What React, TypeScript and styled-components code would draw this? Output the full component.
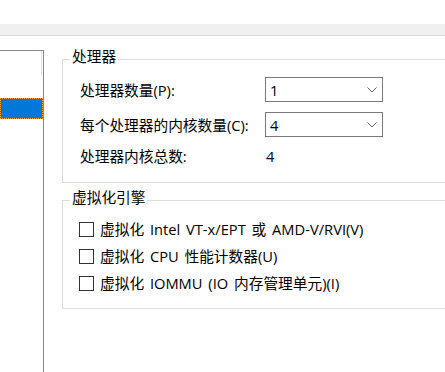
import styled, { createGlobalStyle } from "styled-components";

const GlobalStyle = createGlobalStyle`
  html, body {
    margin: 0;
    padding: 0;
    background: #ffffff;
    overflow: hidden;
  }
  body {
    font-family: "Open Sans", "Noto Sans CJK SC", sans-serif;
    font-size: 14.7px;
    word-spacing: 2px;
    color: #000000;
  }
`;

const Window = styled.div`
  width: 445px;
  height: 372px;
  overflow: hidden;
  display: flex;
  flex-direction: column;
`;

const TitleSpace = styled.div`
  height: 24px;
  background: #ffffff;
`;

const TabStrip = styled.div`
  height: 11px;
  background: #f0f0f0;
  border-bottom: 1px solid #dadada;
`;

const Body = styled.div`
  flex: 1;
  display: flex;
`;

const NavList = styled.div`
  width: 44px;
  margin-top: 14px;
  border-top: 1px solid #828790;
  border-right: 1px solid #828790;
  display: flex;
  flex-direction: column;
`;

const ScrollEdge = styled.div`
  align-self: flex-end;
  width: 1px;
  height: 25px;
  margin-right: 1px;
  background: #e3e3e3;
`;

const NavItem = styled.div<{ $selected?: boolean }>`
  margin-top: 22px;
  width: 43px;
  height: 21px;
  box-sizing: border-box;
  background: ${(p) => (p.$selected ? "#0078d7" : "transparent")};
  border: 1px dotted ${(p) => (p.$selected ? "#f5a243" : "transparent")};
`;

const Settings = styled.div`
  padding: 10px 0 0 18px;
  display: flex;
  flex-direction: column;
  width: 500px;
  flex-shrink: 0;
`;

const Group = styled.fieldset<{ $gap?: number }>`
  margin: ${(p) => p.$gap ?? 0}px 0 0 0;
  padding: 5px 0 17px 7px;
  border: 1px solid #dcdcdc;
  min-width: 0;
`;

const Legend = styled.legend`
  padding: 0 2px 6px;
  line-height: 20px;
`;

const FieldGrid = styled.div`
  margin-left: 10px;
  display: grid;
  grid-template-columns: 185px 118px;
  grid-template-rows: 25px 25px 18px;
  row-gap: 10px;
  align-items: center;
`;

const Label = styled.span`
  line-height: 18px;
  white-space: nowrap;
`;

const Value = styled.span`
  line-height: 18px;
  padding-left: 1px;
`;

const Combo = styled.div`
  height: 25px;
  box-sizing: border-box;
  border: 1px solid #7a7a7a;
  background: #ffffff;
  display: flex;
  align-items: center;
  justify-content: space-between;
  padding: 0 5px 0 4px;
  line-height: 18px;
`;

const Chevron = () => (
  <svg width="10" height="6" viewBox="0 0 10 6">
    <path d="M0.5 0.5 L5 5 L9.5 0.5" fill="none" stroke="#606060" strokeWidth="1" />
  </svg>
);

const CheckList = styled.div`
  margin: 4px 0 0 9px;
  display: flex;
  flex-direction: column;
  gap: 12px;
`;

const CheckRow = styled.label`
  display: flex;
  align-items: center;
  gap: 6px;
  height: 15px;
  line-height: 15px;
  white-space: nowrap;
`;

const Box = styled.span`
  width: 15px;
  height: 15px;
  box-sizing: border-box;
  border: 1px solid #333333;
  background: #ffffff;
  flex-shrink: 0;
`;

const checks = [
  "虚拟化 Intel VT-x/EPT 或 AMD-V/RVI(V)",
  "虚拟化 CPU 性能计数器(U)",
  "虚拟化 IOMMU (IO 内存管理单元)(I)",
];

export default function App() {
  return (
    <Window>
      <GlobalStyle />
      <TitleSpace />
      <TabStrip />
      <Body>
        <NavList>
          <ScrollEdge />
          <NavItem $selected />
        </NavList>
        <Settings>
          <Group>
            <Legend>处理器</Legend>
            <FieldGrid>
              <Label>处理器数量(P):</Label>
              <Combo>
                1
                <Chevron />
              </Combo>
              <Label>每个处理器的内核数量(C):</Label>
              <Combo>
                4
                <Chevron />
              </Combo>
              <Label>处理器内核总数:</Label>
              <Value>4</Value>
            </FieldGrid>
          </Group>
          <Group $gap={4}>
            <Legend>虚拟化引擎</Legend>
            <CheckList>
              {checks.map((c) => (
                <CheckRow key={c}>
                  <Box />
                  {c}
                </CheckRow>
              ))}
            </CheckList>
          </Group>
        </Settings>
      </Body>
    </Window>
  );
}
